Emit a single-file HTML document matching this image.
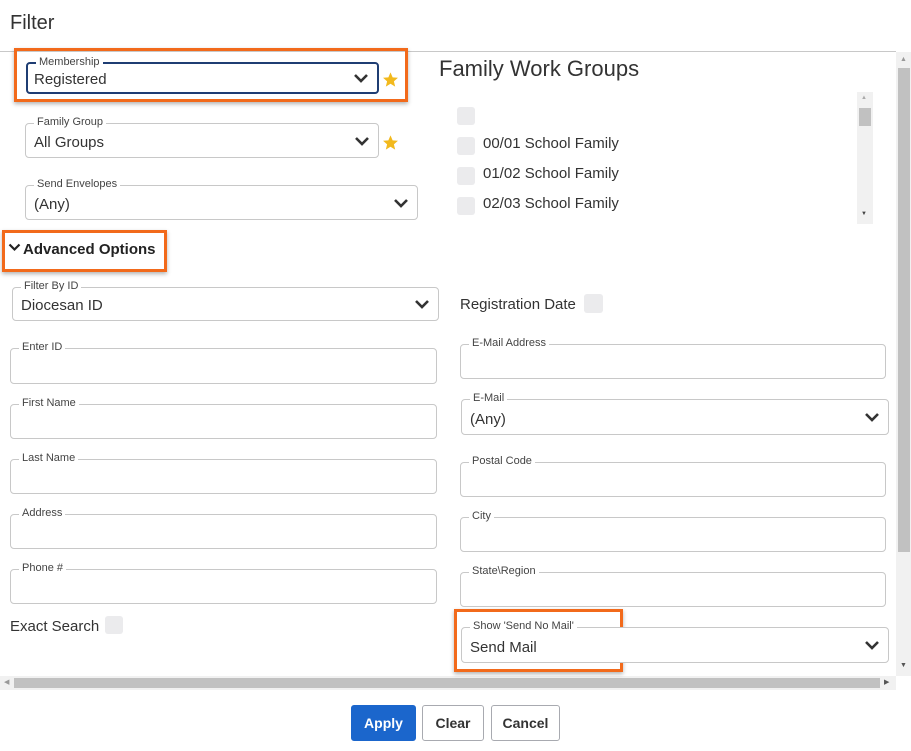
<!DOCTYPE html>
<html><head><style>
*{box-sizing:border-box;margin:0;padding:0}
body{width:911px;height:751px;background:#fff;font-family:"Liberation Sans",sans-serif;color:#333;position:relative;overflow:hidden}
.a{position:absolute}
.f{position:absolute;border:1px solid #c8c8c8;border-radius:4px;background:#fff}
.f .l{position:absolute;left:8px;top:-8px;background:#fff;padding:0 3px;font-size:11px;color:#444;line-height:13px}
.f .v{position:absolute;left:8px;bottom:6px;font-size:15px;color:#333}
.chev{position:absolute;right:8px;top:50%;margin-top:-5px}
.cb{position:absolute;width:18px;height:18px;background:#ebebed;border-radius:3px}
.or{position:absolute;border:3px solid #f26a1b;box-shadow:0 2px 4px rgba(0,0,0,.3)}
.btn{position:absolute;top:705px;height:36px;border:1px solid #a8aab0;border-radius:3px;font-size:14px;font-weight:bold;display:flex;align-items:center;justify-content:center;color:#333;background:#fff}
</style></head><body>
<div class="a" style="left:10px;top:12px;font-size:20px;color:#333">Filter</div>
<div class="a" style="left:0;top:51px;width:896px;height:1px;background:#c8c8c8"></div>
<div class="a" style="left:896px;top:52px;width:15px;height:624px;background:#f1f1f1"></div>
<div class="a" style="left:898px;top:68px;width:12px;height:484px;background:#c1c1c1"></div>
<div class="a" style="left:900px;top:56px;font-size:7px;color:#999">▲</div>
<div class="a" style="left:900px;top:662px;font-size:7px;color:#555">▼</div>
<div class="a" style="left:0;top:676px;width:896px;height:14px;background:#f1f1f1"></div>
<div class="a" style="left:14px;top:678px;width:866px;height:10px;background:#c1c1c1"></div>
<div class="a" style="left:4px;top:678px;font-size:7px;color:#999">◀</div>
<div class="a" style="left:884px;top:678px;font-size:7px;color:#555">▶</div>

<div class="or" style="left:14px;top:48px;width:394px;height:54px"></div>
<div class="f" style="left:26px;top:62px;width:353px;height:32px;border:2px solid #1f3d73"><span class="l">Membership</span><span class="v" style="bottom:4px;left:6px">Registered</span>
<svg class="chev" width="16" height="10" viewBox="0 0 16 10"><path d="M2 2l6 6 6-6" stroke="#333" stroke-width="2.6" fill="none"/></svg></div>
<svg class="a" style="left:382px;top:71px" width="17" height="17" viewBox="0 0 24 24"><path d="M12 2l3 7 7.5.6-5.7 5 1.8 7.4L12 18l-6.6 4 1.8-7.4L1.5 9.6 9 9z" fill="#f2b91d"/></svg>
<div class="f" style="left:25px;top:123px;width:354px;height:35px"><span class="l">Family Group</span><span class="v">All Groups</span>
<svg class="chev" width="16" height="10" viewBox="0 0 16 10"><path d="M2 2l6 6 6-6" stroke="#333" stroke-width="2.6" fill="none"/></svg></div>
<svg class="a" style="left:382px;top:134px" width="17" height="17" viewBox="0 0 24 24"><path d="M12 2l3 7 7.5.6-5.7 5 1.8 7.4L12 18l-6.6 4 1.8-7.4L1.5 9.6 9 9z" fill="#f2b91d"/></svg>
<div class="f" style="left:25px;top:185px;width:393px;height:35px"><span class="l">Send Envelopes</span><span class="v">(Any)</span>
<svg class="chev" width="16" height="10" viewBox="0 0 16 10"><path d="M2 2l6 6 6-6" stroke="#333" stroke-width="2.6" fill="none"/></svg></div>
<div class="or" style="left:2px;top:230px;width:165px;height:42px"></div>
<svg class="a" style="left:8px;top:243px" width="13" height="9" viewBox="0 0 13 9"><path d="M1.5 1.5l5 5 5-5" stroke="#222" stroke-width="2.2" fill="none"/></svg>
<div class="a" style="left:23px;top:241px;font-size:15px;font-weight:bold;color:#222">Advanced Options</div>

<div class="f" style="left:12px;top:287px;width:427px;height:34px"><span class="l">Filter By ID</span><span class="v">Diocesan ID</span>
<svg class="chev" width="16" height="10" viewBox="0 0 16 10"><path d="M2 2l6 6 6-6" stroke="#333" stroke-width="2.6" fill="none"/></svg></div>
<div class="f" style="left:10px;top:348px;width:427px;height:36px"><span class="l">Enter ID</span></div>
<div class="f" style="left:10px;top:404px;width:427px;height:35px"><span class="l">First Name</span></div>
<div class="f" style="left:10px;top:459px;width:427px;height:35px"><span class="l">Last Name</span></div>
<div class="f" style="left:10px;top:514px;width:427px;height:35px"><span class="l">Address</span></div>
<div class="f" style="left:10px;top:569px;width:427px;height:35px"><span class="l">Phone #</span></div>
<div class="a" style="left:10px;top:618px;font-size:15px">Exact Search</div>
<div class="cb" style="left:105px;top:616px"></div>

<div class="a" style="left:439px;top:56px;font-size:22px;color:#333">Family Work Groups</div>
<div class="cb" style="left:457px;top:107px"></div>
<div class="cb" style="left:457px;top:137px"></div><div class="a" style="left:483px;top:135px;font-size:15px">00/01 School Family</div>
<div class="cb" style="left:457px;top:167px"></div><div class="a" style="left:483px;top:165px;font-size:15px">01/02 School Family</div>
<div class="cb" style="left:457px;top:197px"></div><div class="a" style="left:483px;top:195px;font-size:15px">02/03 School Family</div>
<div class="a" style="left:857px;top:92px;width:16px;height:132px;background:#f1f1f1"></div>
<div class="a" style="left:859px;top:108px;width:12px;height:18px;background:#c1c1c1"></div>
<div class="a" style="left:861px;top:95px;font-size:6px;color:#aaa">▲</div>
<div class="a" style="left:861px;top:211px;font-size:6px;color:#444">▼</div>

<div class="a" style="left:460px;top:296px;font-size:15px">Registration Date</div>
<div class="cb" style="left:584px;top:294px;width:19px;height:19px"></div>
<div class="f" style="left:460px;top:344px;width:426px;height:35px"><span class="l">E-Mail Address</span></div>
<div class="f" style="left:461px;top:399px;width:428px;height:36px"><span class="l">E-Mail</span><span class="v">(Any)</span>
<svg class="chev" width="16" height="10" viewBox="0 0 16 10"><path d="M2 2l6 6 6-6" stroke="#333" stroke-width="2.6" fill="none"/></svg></div>
<div class="f" style="left:460px;top:462px;width:426px;height:35px"><span class="l">Postal Code</span></div>
<div class="f" style="left:460px;top:517px;width:426px;height:35px"><span class="l">City</span></div>
<div class="f" style="left:460px;top:572px;width:426px;height:35px"><span class="l">State\Region</span></div>
<div class="or" style="left:454px;top:609px;width:169px;height:63px"></div>
<div class="f" style="left:461px;top:627px;width:428px;height:36px"><span class="l">Show 'Send No Mail'</span><span class="v">Send Mail</span>
<svg class="chev" width="16" height="10" viewBox="0 0 16 10"><path d="M2 2l6 6 6-6" stroke="#333" stroke-width="2.6" fill="none"/></svg></div>

<div class="btn" style="left:351px;width:65px;background:#1b66cc;border-color:#1b66cc;color:#fff">Apply</div>
<div class="btn" style="left:422px;width:62px">Clear</div>
<div class="btn" style="left:491px;width:69px">Cancel</div>
</body></html>
